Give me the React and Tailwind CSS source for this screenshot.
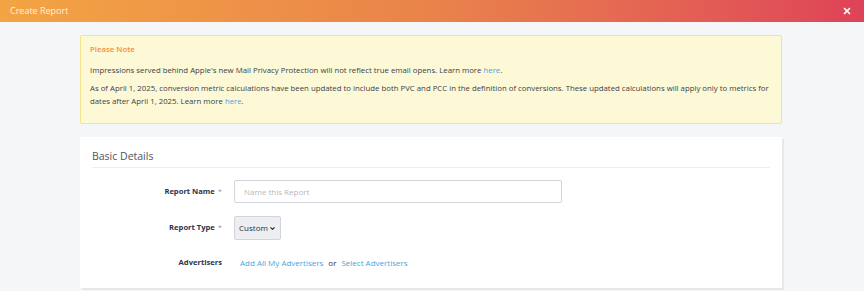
import { X, ChevronDown } from 'lucide-react';

const font = { fontFamily: '"Open Sans", "Liberation Sans", sans-serif' };

function FormRow({ label, required, children, className = '' }) {
  return (
    <div className={`flex items-center ${className}`}>
      <div className="w-[142px] shrink-0 pr-[12px] text-right text-[7.6px] font-bold text-[#2b344d]">
        {label}
        {required && <span className="ml-[3px] font-normal text-[#9aa0aa]">*</span>}
      </div>
      {children}
    </div>
  );
}

export default function App() {
  return (
    <div className="h-[291px] w-[864px] overflow-hidden bg-[#f5f6f8]" style={font}>
      {/* Cabecera */}
      <div className="flex h-[22px] items-center justify-between bg-gradient-to-r from-[#f3a443] via-[#e9834a] to-[#de4258] pl-[10px] pr-[12px]">
        <span className="text-[9px] text-[#fdf0e0]">Create Report</span>
        <X className="h-[10px] w-[10px] text-white" strokeWidth={4} />
      </div>

      <div className="pl-[80px] pr-[82px] pt-[13px]">
        {/* Aviso */}
        <div className="h-[89px] rounded-[2px] border border-[#f3e58c] bg-[#fdf8d6] px-[9px] pt-[7px] text-[7.8px] leading-[13px] text-[#3a3f48]">
          <p className="font-semibold text-[#f2913a]">Please Note</p>
          <p className="mt-[8px]">
            Impressions served behind Apple's new Mail Privacy Protection will not reflect true email opens. Learn more{' '}
            <a className="text-[#46a6dc]">here</a>.
          </p>
          <p className="mt-[5px]">
            As of April 1, 2025, conversion metric calculations have been updated to include both PVC and PCC in the definition of conversions. These updated calculations will apply only to metrics for dates after April 1, 2025. Learn more{' '}
            <a className="text-[#46a6dc]">here</a>.
          </p>
        </div>

        {/* Tarjeta */}
        <div className="mt-[13px] h-[151px] bg-white px-[12px] pt-[11px] shadow-[2px_2px_0_#e6e7e9]">
          <h2 className="border-b border-[#eceef0] pb-[3px] text-[10.5px] leading-[16px] text-[#4d5563]">Basic Details</h2>

          <FormRow label="Report Name" required className="mt-[12px]">
            <input
              placeholder="Name this Report"
              className="h-[23px] w-[328px] rounded-[2px] border border-[#d2d5da] px-[9px] text-[8px] placeholder:text-[#b5b9c0]"
            />
          </FormRow>

          <FormRow label="Report Type" required className="mt-[13px]">
            <div className="flex h-[24px] w-[47px] items-center justify-center gap-[1px] rounded-[2px] border border-[#d2d5da] bg-[#eceef1] text-[8px] text-[#2b2f36]">
              Custom
              <ChevronDown className="h-[7px] w-[7px]" strokeWidth={4} />
            </div>
          </FormRow>

          <FormRow label="Advertisers" className="mt-[17px]">
            <div className="flex items-center pl-[6px] text-[8px]">
              <span className="text-[#46a6dc]">Add All My Advertisers</span>
              <span className="mx-[5px] text-[#2b2f36]">or</span>
              <span className="text-[#46a6dc]">Select Advertisers</span>
            </div>
          </FormRow>
        </div>
      </div>
    </div>
  );
}
